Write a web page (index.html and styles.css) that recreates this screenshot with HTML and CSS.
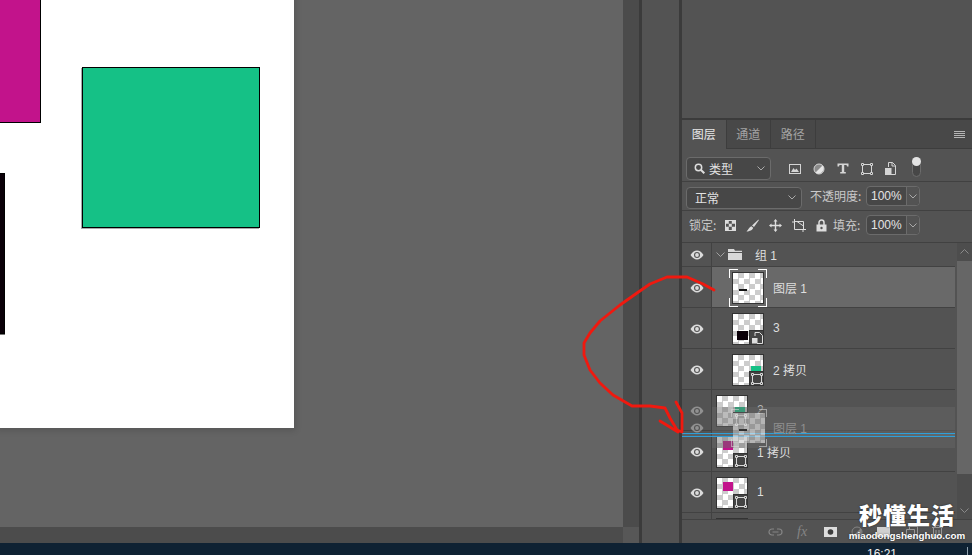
FILE: index.html
```html
<!DOCTYPE html>
<html lang="zh-CN">
<head>
<meta charset="utf-8">
<title>图层</title>
<link rel="stylesheet" href="styles.css">
</head>
<body>
<svg class="defs" width="0" height="0" aria-hidden="true">
  <symbol id="eye" viewBox="0 0 14 10">
    <path d="M0.5 5C2.5 2 4.6 0.6 7 0.6S11.5 2 13.5 5C11.5 8 9.4 9.4 7 9.4S2.5 8 0.5 5Z" fill="currentColor"/>
    <circle cx="7" cy="5" r="3" fill="#535353"/>
    <circle cx="7" cy="5" r="1.9" fill="currentColor"/>
  </symbol>
  <symbol id="shape" viewBox="0 0 12 12">
    <path d="M2 1.5H10M10.5 2V10M10 10.5H2M1.5 10V2" fill="none" stroke="currentColor"/>
    <path d="M0 0H3V3H0ZM9 0H12V3H9ZM0 9H3V12H0ZM9 9H12V12H9Z" fill="#444"/>
    <path d="M.5.5H2.5V2.5H.5ZM9.5.5H11.5V2.5H9.5ZM.5 9.5H2.5V11.5H.5ZM9.5 9.5H11.5V11.5H9.5Z" fill="none" stroke="currentColor"/>
  </symbol>
</svg>
<div class="app">
  <div class="main">
    <div class="work">
      <div class="canvas">
        <div class="page">
          <div class="art art-magenta"></div>
          <div class="art art-green"></div>
          <div class="art art-black"></div>
        </div>
      </div>
      <div class="hbar"></div>
    </div>
    <div class="vstrip"><div class="vstrip-fill"></div><div class="vstrip-corner"></div></div>
    <div class="dock"></div>
    <div class="panel">
      <div class="panel-top"></div>
      <div class="tabs">
        <div class="tab tab-active">图层</div>
        <div class="tab">通道</div>
        <div class="tab">路径</div>
        <div class="tabs-fill"></div>
        <svg class="menu-icon" width="11" height="7" viewBox="0 0 11 7"><path d="M0 .5H11M0 2.5H11M0 4.5H11M0 6.5H11" stroke="#b5b5b5"/></svg>
      </div>
      <div class="bar bar-filter">
        <div class="select select-filter">
          <svg class="icon" width="11" height="11" viewBox="0 0 11 11"><circle cx="4.5" cy="4.5" r="3.2" fill="none" stroke="#ddd" stroke-width="1.5"/><path d="M7 7L10.3 10.3" stroke="#ddd" stroke-width="2"/></svg>
          <span class="select-text">类型</span>
          <svg class="chev" width="8" height="5" viewBox="0 0 8 5"><path d="M.5.5L4 4L7.5.5" fill="none" stroke="#aaa"/></svg>
        </div>
        <div class="filter-icons">
          <svg width="12" height="10" viewBox="0 0 12 10"><rect x=".5" y=".5" width="11" height="9" fill="none" stroke="#d5d5d5"/><path d="M2 8L4.500 4L6 6L7.500 4.500L10 8Z" fill="#d5d5d5"/></svg>
          <svg width="12" height="12" viewBox="0 0 12 12"><circle cx="6" cy="6" r="5" fill="#8b8b8b" stroke="#d5d5d5"/><path d="M9.500 2.500A5 5 0 0 1 2.500 9.500Z" fill="#e6e6e6"/></svg>
          <svg width="12" height="11" viewBox="0 0 12 11"><path d="M.5.500H11.500V3.500H10L9.500 2H7.200V9H8.800V10.500H3.200V9H4.800V2H2.500L2 3.500H.5Z" fill="#d5d5d5"/></svg>
          <svg class="icon-shape" width="12" height="12"><use href="#shape"/></svg>
          <svg width="11" height="13" viewBox="0 0 11 13"><path d="M3.500 5V.5H7.500L10.500 3.500V12.500H6" fill="none" stroke="#d5d5d5"/><path d="M7 .5V4H10.500" fill="none" stroke="#d5d5d5"/><rect x="0" y="6" width="6.500" height="7" fill="#d5d5d5"/></svg>
          <div class="toggle"><div class="toggle-knob"></div></div>
        </div>
      </div>
      <div class="bar bar-blend">
        <div class="select select-blend">
          <span class="select-text">正常</span>
          <svg class="chev" width="8" height="5" viewBox="0 0 8 5"><path d="M.5.5L4 4L7.5.5" fill="none" stroke="#aaa"/></svg>
        </div>
        <span class="label label-opacity">不透明度:</span>
        <div class="field">
          <span class="field-val">100%</span>
          <span class="field-btn"><svg width="8" height="5" viewBox="0 0 8 5"><path d="M.5.5L4 4L7.5.5" fill="none" stroke="#aaa"/></svg></span>
        </div>
      </div>
      <div class="bar bar-lock">
        <span class="label label-lock">锁定:</span>
        <div class="lock-icons">
          <svg width="11" height="11" viewBox="0 0 11 11"><rect x=".5" y=".5" width="10" height="10" fill="#535353" stroke="#ddd"/><path d="M1 1H3.800V3.800H1ZM6.800 1H10V3.800H6.800ZM3.800 3.800H6.800V6.800H3.800ZM1 6.800H3.800V10H1ZM6.800 6.800H10V10H6.800Z" fill="#ddd"/></svg>
          <svg width="13" height="13" viewBox="0 0 13 13"><path d="M12.500.5L6 6.500L8 8L12.800 1.200Z" fill="#ddd"/><path d="M5.300 7.300L7.200 8.800C6.800 11 3.500 12.500.5 12.500C2.500 11 3 8 5.300 7.300Z" fill="#ddd"/></svg>
          <svg width="13" height="13" viewBox="0 0 13 13"><path d="M6.500 0L8.500 2.500H7.200V5.800H10.500V4.500L13 6.500L10.500 8.500V7.200H7.200V10.500H8.500L6.500 13L4.500 10.500H5.800V7.200H2.500V8.500L0 6.500L2.500 4.500V5.800H5.800V2.500H4.500Z" fill="#ddd"/></svg>
          <svg width="14" height="13" viewBox="0 0 14 13"><path d="M3 2.500H11.500V11M11 10.500H2.500V2M0 3H2M12 10.500H14M2.500 0V2M11 11V13" fill="none" stroke="#ddd"/><path d="M5 2.500L11.500 7" stroke="#ddd" fill="none"/></svg>
          <svg width="11" height="13" viewBox="0 0 11 13"><path d="M3 6V3.500A2.500 2.500 0 0 1 8 3.500V6" fill="none" stroke="#ddd" stroke-width="1.500"/><path d="M.5 5.500H10.500V12.500H.5Z" fill="#ddd"/><circle cx="5.500" cy="9" r="1.200" fill="#535353"/></svg>
        </div>
        <span class="label label-fill">填充:</span>
        <div class="field">
          <span class="field-val">100%</span>
          <span class="field-btn"><svg width="8" height="5" viewBox="0 0 8 5"><path d="M.5.5L4 4L7.5.5" fill="none" stroke="#aaa"/></svg></span>
        </div>
      </div>
      <div class="layers">
        <div class="list">
          <div class="row row-group">
            <div class="eye-cell"><svg class="eye" width="14" height="10"><use href="#eye"/></svg></div>
            <div class="cell cell-group">
              <svg class="group-chev" width="9" height="6" viewBox="0 0 9 6"><path d="M.5.500L4.500 4.500L8.500.500" fill="none" stroke="#a0a0a0"/></svg>
              <svg class="folder" width="14" height="11" viewBox="0 0 14 11"><path d="M0 0H6L7 1.800H14V3H0ZM0 4H14V11H0Z" fill="#d8d8d8"/></svg>
              <span class="name name-group">组 1</span>
            </div>
          </div>
          <div class="row row-active">
            <div class="eye-cell"><svg class="eye" width="14" height="10"><use href="#eye"/></svg></div>
            <div class="cell cell-nested">
              <div class="thumb thumb-selected"><span class="mark mark-dash"></span></div>
              <span class="name">图层 1</span>
            </div>
          </div>
          <div class="row">
            <div class="eye-cell"><svg class="eye" width="14" height="10"><use href="#eye"/></svg></div>
            <div class="cell cell-nested">
              <div class="thumb"><span class="mark mark-black"></span>
                <span class="badge"><svg width="12" height="12" viewBox="0 0 12 12"><path d="M4 4V.5H8.500L11.500 3.500V11.500H6" fill="none" stroke="#ddd"/><rect x="1" y="6" width="5.500" height="5.500" fill="#ddd"/></svg></span>
              </div>
              <span class="name">3</span>
            </div>
          </div>
          <div class="row">
            <div class="eye-cell"><svg class="eye" width="14" height="10"><use href="#eye"/></svg></div>
            <div class="cell cell-nested">
              <div class="thumb"><span class="mark mark-green"></span>
                <span class="badge"><svg width="12" height="12"><use href="#shape"/></svg></span>
              </div>
              <span class="name">2 拷贝</span>
            </div>
          </div>
          <div class="row row-dim">
            <div class="eye-cell"><svg class="eye" width="14" height="10"><use href="#eye"/></svg></div>
            <div class="cell cell-top">
              <div class="thumb"><span class="mark mark-green"></span>
                <span class="badge"><svg width="12" height="12"><use href="#shape"/></svg></span>
              </div>
              <span class="name">2</span>
            </div>
          </div>
          <div class="row">
            <div class="eye-cell"><svg class="eye" width="14" height="10"><use href="#eye"/></svg></div>
            <div class="cell cell-top">
              <div class="thumb"><span class="mark mark-magenta"></span>
                <span class="badge"><svg width="12" height="12"><use href="#shape"/></svg></span>
              </div>
              <span class="name">1 拷贝</span>
            </div>
          </div>
          <div class="row">
            <div class="eye-cell"><svg class="eye" width="14" height="10"><use href="#eye"/></svg></div>
            <div class="cell cell-top">
              <div class="thumb"><span class="mark mark-magenta"></span>
                <span class="badge"><svg width="12" height="12"><use href="#shape"/></svg></span>
              </div>
              <span class="name">1</span>
            </div>
          </div>
          <div class="row">
            <div class="eye-cell"></div>
            <div class="cell cell-top"><div class="thumb"></div></div>
          </div>
          <div class="drag-band"></div>
          <div class="drag-line"></div>
          <svg class="eye drag-eye" width="14" height="10"><use href="#eye"/></svg>
          <div class="drag-thumb"><span class="mark mark-dash"></span></div>
          <span class="drag-name">图层 1</span>
        </div>
        <div class="scroll">
          <svg class="scroll-arrow" width="9" height="5" viewBox="0 0 9 5"><path d="M.5 4.500L4.500.5L8.500 4.500" fill="none" stroke="#8a8a8a"/></svg>
          <div class="scroll-thumb"></div>
          <div class="scroll-track"></div>
          <svg class="scroll-arrow" width="9" height="5" viewBox="0 0 9 5"><path d="M.5.5L4.500 4.500L8.500.5" fill="none" stroke="#8a8a8a"/></svg>
        </div>
      </div>
      <div class="footer">
        <svg width="15" height="8" viewBox="0 0 15 8"><path d="M6 1H4A3 3 0 0 0 4 7H6M9 1H11A3 3 0 0 1 11 7H9M4.500 4H10.500" fill="none" stroke="#858585" stroke-width="1.200"/></svg>
        <span class="fx">fx</span>
        <svg width="13" height="10" viewBox="0 0 13 10"><path d="M0 0H13V10H0Z" fill="#ddd"/><circle cx="6.500" cy="5" r="2.800" fill="#3c3c3c"/></svg>
        <svg width="12" height="12" viewBox="0 0 12 12"><circle cx="6" cy="6" r="5" fill="none" stroke="#858585"/><path d="M9.500 2.500A5 5 0 0 1 2.500 9.500Z" fill="#858585"/></svg>
        <svg width="13" height="10" viewBox="0 0 13 10"><path d="M0 0H13V10H0Z" fill="#d0d0d0"/></svg>
        <svg class="foot-new" width="12" height="12" viewBox="0 0 12 12"><path d="M3.500 3V.5H11.500V9H9M.5 3.500H8.500V11.500H.5Z" fill="none" stroke="#999"/></svg>
        <svg width="11" height="13" viewBox="0 0 11 13"><path d="M0 2.500H11M3.500 2V.5H7.500V2M1.500 3V12.500H9.500V3M4 5V11M7 5V11" fill="none" stroke="#999"/></svg>
      </div>
    </div>
  </div>
  <div class="taskbar"><span class="clock">16:21</span><span class="task-line"></span></div>
  <svg class="scribble" width="972" height="555" viewBox="0 0 972 555" aria-hidden="true">
    <path d="M714 290L703 284L687 277H667L650 284L637 293L620 305L600 321L590 333L584 343L584 355L590 370L600 383L613 395L632 406H650L665 408L670 418L677 430L682 432M676 402L682 413V432M660 421L678 432" fill="none" stroke="#f0190f" stroke-width="2.800" stroke-linejoin="round" stroke-linecap="round"/>
  </svg>
  <div class="watermark">
    <div class="wm-title">秒懂生活</div>
    <div class="wm-url">miaodongshenghuo.com</div>
  </div>
</div>
</body>
</html>
```
FILE: styles.css
```css
* { box-sizing: border-box; }
html, body { margin: 0; padding: 0; }
body {
  width: 972px;
  height: 555px;
  overflow: hidden;
  background: #0f2233;
  font-family: "Noto Sans CJK SC", "Liberation Sans", sans-serif;
  font-size: 12px;
  color: #d6d6d6;
}
.defs { position: absolute; }
.app { position: relative; width: 972px; height: 555px; display: flex; flex-direction: column; overflow: hidden; }
.main { height: 543px; display: flex; }

.work { width: 623px; display: flex; flex-direction: column; }
.canvas { position: relative; flex: 1; background: #646464; overflow: hidden; }
.hbar { height: 16px; background: #4c4c4c; }
.page {
  position: absolute;
  left: -6px;
  top: -10px;
  width: 300px;
  height: 438px;
  background: #fff;
  box-shadow: 2px 3px 6px rgba(0, 0, 0, .12);
}
.art { position: absolute; border: 1px solid #000; }
.art-magenta { left: -10px; top: 0; width: 57px; height: 133px; background: #c2138b; }
.art-green { left: 88px; top: 77px; width: 178px; height: 161px; background: #15c186; box-shadow: -1px 1px 0 #aaa; }
.art-black { left: 0; top: 183px; width: 11px; height: 161px; background: #0a0008; box-shadow: 0 1px 0 #777; }

.vstrip { width: 16px; display: flex; flex-direction: column; }
.vstrip-fill { flex: 1; background: #4b4b4b; }
.vstrip-corner { height: 16px; background: #575757; }
.dock { width: 43px; background: #535353; border-left: 3px solid #3b3b3b; border-right: 3px solid #3b3b3b; }

.panel { width: 290px; display: flex; flex-direction: column; background: #535353; }
.panel-top { height: 120px; border-bottom: 2px solid #3b3b3b; }
.tabs { height: 29px; display: flex; align-items: stretch; background: #484848; border-bottom: 1px solid #3d3d3d; position: relative; }
.tab { width: 44.500px; display: flex; align-items: center; justify-content: center; padding-bottom: 2px; font-size: 12px; color: #a3a3a3; border-right: 1px solid #3d3d3d; }
.tab-active { color: #e8e8e8; background: #535353; margin-bottom: -1px; }
.tabs-fill { flex: 1; }
.menu-icon { align-self: center; margin-right: 7px; }

.bar { display: flex; align-items: center; border-bottom: 1px solid #414141; }
.bar-filter { height: 33px; padding: 7px 0 0 4px; }
.bar-blend { height: 29px; padding-left: 4px; }
.bar-lock { height: 32px; padding: 0 0 3px 7px; }
.select { display: flex; align-items: center; height: 23px; background: #474747; border: 1px solid #6b6b6b; border-radius: 4px; }
.select-filter { width: 85px; padding: 0 5px 0 7px; }
.select-blend { width: 116px; height: 22px; margin-top: 4px; padding: 0 5px 2px 8px; }
.select-text { flex: 1; color: #e2e2e2; }
.select-filter .select-text { margin-left: 4px; }
.filter-icons { display: flex; align-items: center; margin-left: 18px; gap: 12px; }
.toggle { width: 9px; height: 17px; border: 1px solid #6c6c6c; border-radius: 5px; position: relative; margin-left: 4px; background: #474747; }
.toggle-knob { position: absolute; left: -1px; top: -4px; width: 9px; height: 9px; border-radius: 50%; background: #e4e4e4; }
.label { color: #c9c9c9; font-size: 12px; white-space: nowrap; margin-bottom: 2px; }
.label-opacity { margin-left: 8px; width: 56px; }
.label-lock { width: 36px; }
.lock-icons { display: flex; align-items: center; gap: 10px; }
.label-fill { margin-left: 6px; width: 33px; }
.field { display: flex; width: 54px; height: 20px; border: 1px solid #6b6b6b; border-radius: 4px; background: #474747; }
.field-val { width: 39px; padding-left: 4px; font-family: "Liberation Sans", sans-serif; font-size: 12px; line-height: 18px; color: #e4e4e4; }
.field-btn { flex: 1; display: flex; align-items: center; justify-content: center; background: #535353; border-left: 1px solid #6b6b6b; border-radius: 0 4px 4px 0; }

.layers { height: 276px; display: flex; }
.list { position: relative; width: 273px; overflow: hidden; }
.row { height: 41px; display: flex; border-bottom: 1px solid #424242; }
.row-group { height: 24px; }
.eye-cell { width: 30px; display: flex; align-items: center; justify-content: center; padding-top: 2px; border-right: 1px solid #424242; background: #535353; }
.row-group .eye-cell { padding-top: 0; }
.eye { color: #dcdcdc; display: block; }
.cell { flex: 1; display: flex; align-items: center; min-width: 0; padding-top: 2px; }
.cell-group { padding: 0 0 0 4px; }
.group-chev { margin-right: 3px; }
.folder { margin-right: 13px; }
.cell-nested { padding-left: 20px; }
.cell-top { padding-left: 4px; }
.row-active .cell { background: #696969; }
.name { margin: 0 0 2px 9px; font-size: 12px; color: #dedede; white-space: nowrap; font-family: "Liberation Sans", "Noto Sans CJK SC", sans-serif; }
.name-group { margin: 0; }
.thumb, .drag-thumb {
  position: relative;
  width: 32px;
  height: 32px;
  border: 1px solid #333;
  background-color: #fff;
  background-image: conic-gradient(#ccc 25%, transparent 0 50%, #ccc 0 75%, transparent 0);
  background-size: 11px 11px;
}
.thumb-selected::before {
  content: "";
  position: absolute;
  inset: -4px;
  background:
    linear-gradient(#fff, #fff) 0 0 / 9px 1px no-repeat,
    linear-gradient(#fff, #fff) 0 0 / 1px 9px no-repeat,
    linear-gradient(#fff, #fff) 100% 0 / 9px 1px no-repeat,
    linear-gradient(#fff, #fff) 100% 0 / 1px 9px no-repeat,
    linear-gradient(#fff, #fff) 0 100% / 9px 1px no-repeat,
    linear-gradient(#fff, #fff) 0 100% / 1px 9px no-repeat,
    linear-gradient(#fff, #fff) 100% 100% / 9px 1px no-repeat,
    linear-gradient(#fff, #fff) 100% 100% / 1px 9px no-repeat;
}
.mark { position: absolute; display: block; }
.mark-dash { left: 6px; top: 16px; width: 8px; height: 2px; background: #111; }
.mark-black { left: 4px; top: 17px; width: 11px; height: 9px; background: #0a0008; }
.mark-green { left: 18px; top: 11px; width: 10px; height: 6px; background: #15c186; }
.mark-magenta { left: 6px; top: 4px; width: 10px; height: 9px; background: #c2138b; }
.badge { position: absolute; right: -1px; bottom: -1px; width: 15px; height: 15px; padding: 1px 0 0 1px; display: flex; align-items: flex-start; justify-content: flex-start; background: #444; border: 1px solid #333; color: #d8d8d8; }

.row-dim .eye { opacity: .45; }
.row-dim .name { opacity: .7; }
.drag-band { position: absolute; left: 30px; right: -2px; top: 164px; height: 41px; background: rgba(105, 105, 105, .45); }
.drag-line { position: absolute; left: 0; right: 0; top: 190px; height: 4px; border-top: 1px solid #2f9fd8; border-bottom: 1px solid #2f9fd8; background: rgba(120, 190, 220, .12); }
.drag-eye { position: absolute; left: 8px; top: 180px; opacity: .45; }
.drag-thumb { position: absolute; left: 51px; top: 170px; height: 30px; opacity: .55; border: 0; }
.drag-thumb::before {
  content: "";
  position: absolute;
  inset: -4px -2px;
  background:
    linear-gradient(#ddd, #ddd) 0 0 / 8px 1px no-repeat,
    linear-gradient(#ddd, #ddd) 0 0 / 1px 8px no-repeat,
    linear-gradient(#ddd, #ddd) 100% 0 / 8px 1px no-repeat,
    linear-gradient(#ddd, #ddd) 100% 0 / 1px 8px no-repeat,
    linear-gradient(#ddd, #ddd) 0 100% / 8px 1px no-repeat,
    linear-gradient(#ddd, #ddd) 0 100% / 1px 8px no-repeat,
    linear-gradient(#ddd, #ddd) 100% 100% / 8px 1px no-repeat,
    linear-gradient(#ddd, #ddd) 100% 100% / 1px 8px no-repeat;
}
.drag-name { position: absolute; left: 91px; top: 176px; font-size: 12px; color: #8f8f8f; font-family: "Liberation Sans", "Noto Sans CJK SC", sans-serif; }

.scroll { flex: 1; display: flex; flex-direction: column; align-items: center; background: #4d4d4d; border-left: 2px solid #535353; }
.scroll-arrow { flex: none; margin: 6px 0; }
.scroll-thumb { width: 100%; height: 213px; margin-top: 1px; background: #666; flex: none; }
.scroll-track { flex: 1; }

.footer { flex: 1; display: flex; align-items: center; padding-left: 86px; gap: 14px; border-top: 1px solid #424242; background: #535353; }
.foot-new { margin-left: 2px; }
.fx { font-family: "Liberation Serif", serif; font-style: italic; font-size: 14px; color: #858585; width: 13px; }

.taskbar { height: 12px; background: #0f2233; position: relative; overflow: hidden; display: flex; }
.clock { margin: 4px 0 0 867px; font-family: "Liberation Sans", sans-serif; font-size: 12px; line-height: 14px; color: #f0f0f0; }
.task-line { position: absolute; left: 967px; top: 4px; width: 1px; height: 8px; background: #8fa0ad; }

.scribble { position: absolute; left: 0; top: 0; pointer-events: none; }
.watermark { position: absolute; left: 842px; top: 498px; width: 130px; text-align: center; color: #fff; text-shadow: 0 0 2px rgba(0, 0, 0, .6); }
.wm-title { font-size: 23px; font-weight: 900; letter-spacing: 1px; line-height: 32px; }
.wm-url { font-family: "Liberation Sans", sans-serif; font-weight: 700; font-size: 9.800px; line-height: 12px; }
```
